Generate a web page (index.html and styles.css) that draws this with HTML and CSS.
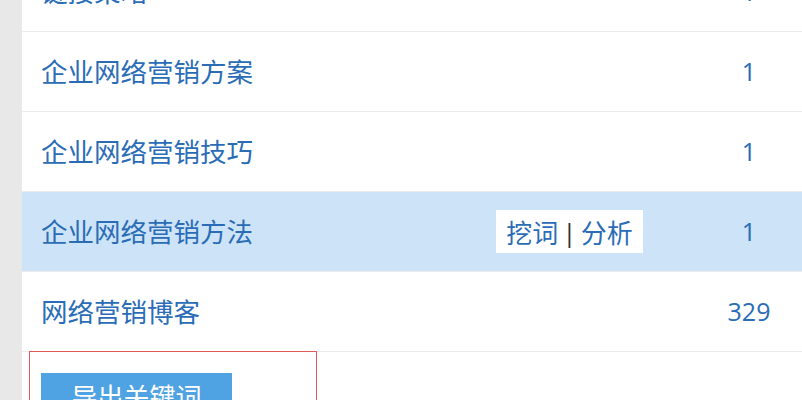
FILE: index.html
```html
<!DOCTYPE html>
<html lang="zh-CN">
<head>
<meta charset="utf-8">
<link rel="stylesheet" href="styles.css">
</head>
<body>
<div class="page">
  <div class="side"></div>
  <div class="main">
    <div class="list">
      <div class="row"><span class="kw">链接策略</span><span class="count">1</span></div>
      <div class="row"><span class="kw">企业网络营销方案</span><span class="count">1</span></div>
      <div class="row"><span class="kw">企业网络营销技巧</span><span class="count">1</span></div>
      <div class="row active"><span class="kw">企业网络营销方法</span><span class="actions"><span class="act">挖词</span><span class="sep">|</span><span class="act">分析</span></span><span class="count">1</span></div>
      <div class="row"><span class="kw">网络营销博客</span><span class="count">329</span></div>
    </div>
    <div class="export-box">
      <button class="export-btn">导出关键词</button>
    </div>
  </div>
</div>
</body>
</html>
```
FILE: styles.css
```css
html, body {
  margin: 0;
  padding: 0;
  height: 100%;
  overflow: hidden;
}
body {
  background: #e9e9e9;
  font-family: "Noto Sans CJK SC", "Noto Sans", sans-serif;
}
.page {
  display: flex;
  height: 400px;
}
.side {
  width: 22px;
  flex: none;
  background: #e8e8e8;
}
.main {
  flex: 1;
  background: #ffffff;
  overflow: hidden;
}
.list {
  margin-top: -48px;
}
.row {
  display: flex;
  align-items: center;
  height: 79px;
  border-bottom: 1px solid #ebebeb;
  padding-left: 19px;
  color: #2a6db6;
  font-size: 26.5px;
}
.row.active {
  background: #cde3f7;
}
.kw {
  flex: 1;
  line-height: 1;
}
.actions {
  display: flex;
  align-items: center;
  justify-content: center;
  gap: 4px;
  width: 147px;
  height: 43px;
  background: #ffffff;
  margin-right: 53px;
  font-size: 26px;
  line-height: 1;
}
.sep {
  color: #333333;
  font-family: "Open Sans", sans-serif;
}
.count {
  width: 106px;
  text-align: center;
  font-family: "Open Sans", "Noto Sans", sans-serif;
  font-size: 25px;
  line-height: 1;
}
.export-box {
  margin: -1px 0 0 7px;
  width: 288px;
  height: 80px;
  border: 1px solid #e05a5a;
  padding: 21px 0 0 11px;
  box-sizing: border-box;
}
.export-btn {
  display: block;
  width: 191px;
  height: 46px;
  border: none;
  background: #4fa3e3;
  color: #ffffff;
  font-family: "Noto Sans CJK SC", sans-serif;
  font-size: 26px;
  padding: 0;
  line-height: 46px;
}
```
